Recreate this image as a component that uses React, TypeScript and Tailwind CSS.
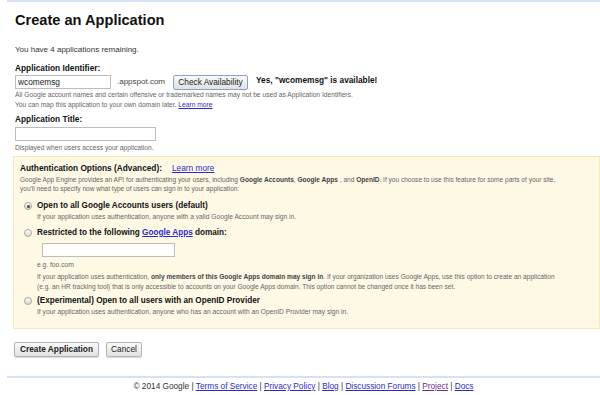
import React from "react";

const Radio = ({ checked }: { checked?: boolean }) => (
  <span className="w-[8px] h-[8px] rounded-full border border-[#a5a5a5] bg-gradient-to-b from-[#ffffff] to-[#d8d8d8] flex items-center justify-center shrink-0">
    {checked && <span className="w-[3px] h-[3px] rounded-full bg-[#444]" />}
  </span>
);

const Btn = ({ label, bold, w }: { label: string; bold?: boolean; w: string }) => (
  <button
    type="button"
    className={`${w} h-[15px] flex items-center justify-center rounded-[2px] border border-[#b3b3b3] bg-gradient-to-b from-[#fafafa] to-[#e1e1e1] shadow-[0_1px_1px_rgba(0,0,0,0.15)] text-[8.3px] text-[#222] ${bold ? "font-bold" : ""}`}
  >
    {label}
  </button>
);

const App = () => {
  return (
    <main className="w-[600px] h-[395px] overflow-hidden bg-white pl-[7px] font-['Liberation_Sans',Arial,sans-serif] text-[#333]">
      <div className="h-[2px] bg-[#d6e1f5]" />
      <div className="pl-[8px]">
        {/* heading */}
        <div className="h-[36px] flex items-center">
          <h1 className="text-[14.6px] font-bold text-[#111] leading-none">Create an Application</h1>
        </div>
        <div className="mt-[5px] h-[13px] flex items-center text-[8px]">You have 4 applications remaining.</div>

        {/* identifier */}
        <div className="mt-[6px] h-[12px] flex items-center text-[8.3px] font-bold text-[#111]">Application Identifier:</div>
        <div className="h-[16px] flex items-center">
          <input
            readOnly
            value="wcomemsg"
            className="w-[96px] h-[14px] border border-[#bdbdbd] px-[2px] text-[8.3px] text-[#222] outline-none"
          />
          <span className="ml-[6px] text-[8px] text-[#444]">.appspot.com</span>
          <button
            type="button"
            className="ml-[8px] w-[75px] h-[15px] flex items-center justify-center rounded-[2px] border border-[#8aa2c8] bg-gradient-to-b from-[#fafafa] to-[#e1e1e1] text-[8.3px] text-[#222]"
          >
            Check Availability
          </button>
          <span className="ml-[8px] text-[8.3px] font-bold text-[#111] -mt-[4px]">Yes, "wcomemsg" is available!</span>
        </div>
        <div className="h-[10px] flex items-center text-[6.7px] text-[#666]">
          All Google account names and certain offensive or trademarked names may not be used as Application Identifiers.
        </div>
        <div className="h-[11px] flex items-center text-[6.7px] text-[#666]">
          You can map this application to your own domain later.&nbsp;
          <a className="text-[#2b2bcc] underline">Learn more</a>
        </div>

        {/* title */}
        <div className="mt-[2px] h-[12px] flex items-center text-[8.3px] font-bold text-[#111]">Application Title:</div>
        <input readOnly className="mt-[2px] block w-[141px] h-[14px] border border-[#bdbdbd] outline-none" />
        <div className="mt-[2px] h-[10px] flex items-center text-[6.7px] text-[#666]">Displayed when users access your application.</div>

        {/* auth options */}
        <section className="mt-[3px] -ml-[2px] border border-[#f5eab8] bg-[#fef9e5] pl-[6px] pt-[5px] pb-[11px]">
          <div className="h-[12px] flex items-center text-[8.3px]">
            <span className="font-bold text-[#111]">Authentication Options (Advanced):</span>
            <a className="ml-[10px] text-[#2b2bcc] underline">Learn more</a>
          </div>
          <p className="mt-[1px] text-[6.55px] leading-[9px] text-[#666] whitespace-nowrap">
            Google App Engine provides an API for authenticating your users, including <b className="text-[#444]">Google Accounts</b>,{" "}
            <b className="text-[#444]">Google Apps</b> , and <b className="text-[#444]">OpenID</b>. If you choose to use this feature for
            some parts of your site,
            <br />
            you'll need to specify now what type of users can sign in to your application:
          </p>

          <div className="mt-[7px] ml-[4px] h-[12px] flex items-center gap-[5px]">
            <Radio checked />
            <span className="text-[8.2px] font-bold text-[#111]">Open to all Google Accounts users (default)</span>
          </div>
          <div className="ml-[17px] h-[10px] flex items-center text-[6.7px] text-[#666]">
            If your application uses authentication, anyone with a valid Google Account may sign in.
          </div>

          <div className="mt-[5px] ml-[4px] h-[12px] flex items-center gap-[5px]">
            <Radio />
            <span className="text-[8.2px] font-bold text-[#111]">
              Restricted to the following <a className="text-[#2b2bcc] underline">Google Apps</a> domain:
            </span>
          </div>
          <input readOnly className="mt-[4px] ml-[22px] block w-[133px] h-[14px] border border-[#bdbdbd] bg-white outline-none" />
          <div className="mt-[3px] ml-[17px] h-[11px] flex items-center text-[6.7px] text-[#666]">e.g. foo.com</div>
          <p className="mt-[1px] ml-[17px] text-[6.6px] leading-[10px] text-[#666] whitespace-nowrap">
            If your application uses authentication, <b className="text-[#444]">only members of this Google Apps domain may sign in</b>. If
            your organization uses Google Apps, use this option to create an application
            <br />
            (e.g. an HR tracking tool) that is only accessible to accounts on your Google Apps domain. This option cannot be changed once it
            has been set.
          </p>

          <div className="mt-[3px] ml-[4px] h-[12px] flex items-center gap-[5px]">
            <Radio />
            <span className="text-[8.2px] font-bold text-[#111]">(Experimental) Open to all users with an OpenID Provider</span>
          </div>
          <div className="ml-[17px] h-[10px] flex items-center text-[6.7px] text-[#666]">
            If your application uses authentication, anyone who has an account with an OpenID Provider may sign in.
          </div>
        </section>

        <div className="mt-[13px] -ml-[1px] flex items-center gap-[7px]">
          <Btn label="Create Application" bold w="w-[85px]" />
          <Btn label="Cancel" w="w-[36px]" />
        </div>
      </div>

      {/* footer */}
      <div className="mt-[19px] h-[2px] bg-[#d6e1f5]" />
      <footer className="mt-[2px] h-[14px] flex items-center justify-center text-[8.25px] text-[#333] whitespace-nowrap">
        © 2014 Google |&nbsp;<a className="text-[#2b2bcc] underline">Terms of Service</a>&nbsp;|&nbsp;
        <a className="text-[#2b2bcc] underline">Privacy Policy</a>&nbsp;|&nbsp;
        <a className="text-[#2b2bcc] underline">Blog</a>&nbsp;|&nbsp;
        <a className="text-[#2b2bcc] underline">Discussion Forums</a>&nbsp;|&nbsp;
        <a className="text-[#6a2f8f] underline">Project</a>&nbsp;|&nbsp;
        <a className="text-[#2b2bcc] underline">Docs</a>
      </footer>
    </main>
  );
};

export default App;
